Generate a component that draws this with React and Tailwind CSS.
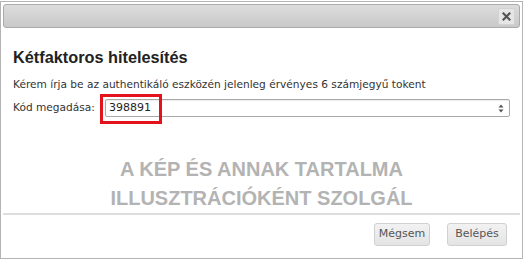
export default function App() {
  return (
    <div className="w-[527px] h-[260px] bg-white overflow-hidden" style={{ fontFamily: '"DejaVu Sans", Verdana, sans-serif' }}>
      <div className="mt-px w-[523px] h-[258px] border border-[#b4b4b4] p-[2px] flex flex-col">
        {/* title bar */}
        <div className="h-[24px] rounded-[3px] border border-[#aaaaaa] bg-gradient-to-b from-[#dcdcdc] to-[#c9c9c9] flex items-center justify-end pr-[4px]">
          <button className="w-[17px] h-[17px] rounded-[2px] bg-[#e6e6e6] border border-[#d3d3d3] flex items-center justify-center">
            <svg width="9" height="9" viewBox="0 0 9 9">
              <path d="M1.5 1.5 L7.5 7.5 M7.5 1.5 L1.5 7.5" stroke="#555" strokeWidth="2.2" strokeLinecap="square" />
            </svg>
          </button>
        </div>

        <div className="flex-1 px-[10px] flex flex-col">
          <h2 className="mt-[19px] text-[16.3px] leading-[20px] font-bold text-[#222]" style={{ fontFamily: '"Liberation Sans", Arial, sans-serif' }}>
            Kétfaktoros hitelesítés
          </h2>
          <p className="mt-[10px] text-[10.6px] leading-[14px] text-[#333]">
            Kérem írja be az authentikáló eszközén jelenleg érvényes 6 számjegyű tokent
          </p>
          <div className="mt-[8px] flex items-center">
            <span className="text-[10.6px] text-[#333] w-[92px] shrink-0">Kód megadása:</span>
            <div className="relative flex-1 h-[18px] border border-[#a9a9a9] rounded-[2px] flex items-center pl-[3px] pr-[5px] shadow-[inset_0_1px_1px_rgba(0,0,0,0.08)]">
              <span className="flex-1 text-[11px] text-[#222]">398891</span>
              <svg width="6" height="9" viewBox="0 0 6 9">
                <path d="M3 0.5 L5.5 3.5 L0.5 3.5 Z M3 8.5 L5.5 5.5 L0.5 5.5 Z" fill="#555" />
              </svg>
              <div className="absolute left-[-6px] top-[-6px] w-[62px] h-[30px] border-[3px] border-[#e3121b]" />
            </div>
          </div>
          <div className="mt-[38px] text-center text-[20px] leading-[29px] font-bold text-[#b3b3b3]" style={{ fontFamily: '"Liberation Sans", Arial, sans-serif' }}>
            <div>A KÉP ÉS ANNAK TARTALMA</div>
            <div>ILLUSZTRÁCIÓKÉNT SZOLGÁL</div>
          </div>
        </div>

        <div className="h-[2px] bg-[#dddddd] mt-auto" />
        <div className="flex justify-end gap-[17px] pr-[13px] pt-[8px] pb-[10px]">
          <button className="h-[23px] w-[56px] rounded-[3px] border border-[#d0d0d0] bg-gradient-to-b from-[#f2f2f2] to-[#e4e4e4] text-[11px] text-[#555]">Mégsem</button>
          <button className="h-[23px] w-[60px] rounded-[3px] border border-[#d0d0d0] bg-gradient-to-b from-[#f2f2f2] to-[#e4e4e4] text-[11px] text-[#555]">Belépés</button>
        </div>
      </div>
    </div>
  );
}
